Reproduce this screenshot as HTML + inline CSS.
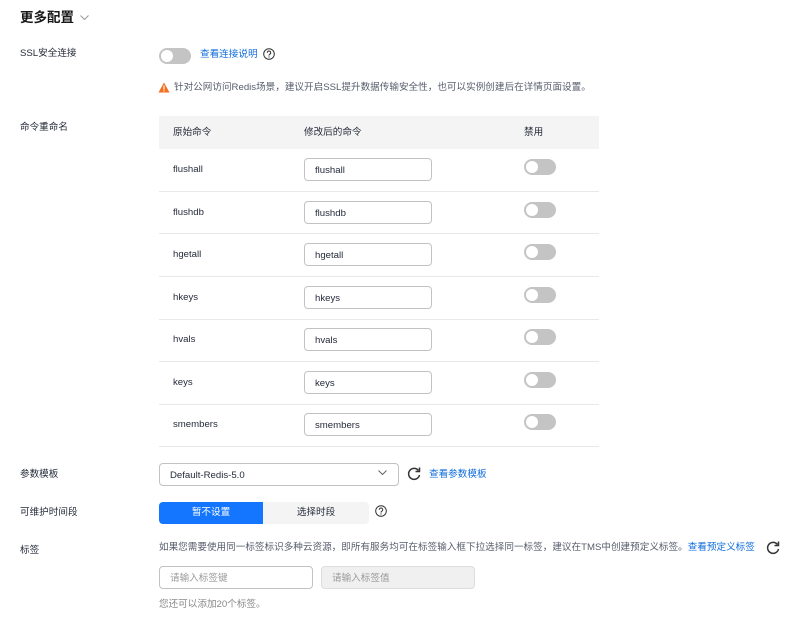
<!DOCTYPE html>
<html><head><meta charset="utf-8"><style>
*{margin:0;padding:0;box-sizing:border-box}
body{width:796px;height:628px;background:#fff;font-family:"Liberation Sans","Noto Sans CJK SC",sans-serif;font-size:9.6px;color:#252b3a;position:relative;overflow:hidden}
.a{position:absolute;white-space:nowrap;line-height:12px}
.lbl{left:20px}
.tg{position:absolute;width:32px;height:16px;border-radius:8px;background:#c4c4c4}
.tg::after{content:"";position:absolute;left:2px;top:2px;width:12px;height:12px;border-radius:50%;background:#fff}
.inp{position:absolute;border:1px solid #c2c2c2;border-radius:4px;background:#fff;padding-left:10px;line-height:23px;height:23px}
.link{color:#0f6cdc}
.sep{position:absolute;left:159px;width:440px;height:1px;background:#e8e8e8}
</style></head><body>
<div class="a" style="left:20px;top:9px;font-size:13.5px;line-height:17px;font-weight:bold;color:#191919">更多配置</div>
<svg class="a" style="left:80px;top:15px" width="9" height="6"><path d="M0.5 0.5L4.5 4.5L8.5 0.5" fill="none" stroke="#999" stroke-width="1"/></svg>

<svg width="0" height="0" style="position:absolute"><defs><g id="q"><circle cx="6" cy="6" r="5.3" fill="none" stroke="#333" stroke-width="1"/><path d="M4.3 4.7A1.7 1.7 0 1 1 6.6 6.3C6.1 6.6 6 6.9 6 7.6" fill="none" stroke="#333" stroke-width="1"/><circle cx="6" cy="9" r="0.6" fill="#333"/></g><g id="r"><path d="M11.5 4.5A5.5 5.5 0 1 0 12.5 9" fill="none" stroke="#333" stroke-width="1.5"/><path d="M12.5 1.5V5.5H8.5" fill="none" stroke="#333" stroke-width="1.5"/></g></defs></svg>

<div class="a lbl" style="top:48px">SSL安全连接</div>
<div class="tg" style="left:159px;top:48px"></div>
<div class="a link" style="left:200px;top:49px">查看连接说明</div>
<svg class="a" style="left:263px;top:48px" width="12" height="12"><use href="#q"/></svg>
<svg class="a" style="left:158px;top:82px" width="12" height="11"><path d="M6 0.5L11.5 10.5H0.5Z" fill="#f66f1c"/><rect x="5.4" y="3.5" width="1.2" height="4" fill="#fff"/><rect x="5.4" y="8.2" width="1.2" height="1.2" fill="#fff"/></svg>
<div class="a" style="left:174px;top:82px;color:#575d6c">针对公网访问Redis场景，建议开启SSL提升数据传输安全性，也可以实例创建后在详情页面设置。</div>

<div class="a lbl" style="top:122px">命令重命名</div>
<div class="a" style="left:159px;top:116px;width:440px;height:33px;background:#f4f4f4"></div>
<div class="a" style="left:173px;top:127px">原始命令</div>
<div class="a" style="left:304px;top:127px">修改后的命令</div>
<div class="a" style="left:524px;top:127px">禁用</div>

<div class="a" style="left:173px;top:164px">flushall</div><div class="inp" style="left:304px;top:158px;width:128px">flushall</div><div class="tg" style="left:524px;top:159px"></div><div class="sep" style="top:191px"></div>
<div class="a" style="left:173px;top:207px">flushdb</div><div class="inp" style="left:304px;top:201px;width:128px">flushdb</div><div class="tg" style="left:524px;top:202px"></div><div class="sep" style="top:233px"></div>
<div class="a" style="left:173px;top:249px">hgetall</div><div class="inp" style="left:304px;top:243px;width:128px">hgetall</div><div class="tg" style="left:524px;top:244px"></div><div class="sep" style="top:276px"></div>
<div class="a" style="left:173px;top:292px">hkeys</div><div class="inp" style="left:304px;top:286px;width:128px">hkeys</div><div class="tg" style="left:524px;top:287px"></div><div class="sep" style="top:319px"></div>
<div class="a" style="left:173px;top:334px">hvals</div><div class="inp" style="left:304px;top:328px;width:128px">hvals</div><div class="tg" style="left:524px;top:329px"></div><div class="sep" style="top:361px"></div>
<div class="a" style="left:173px;top:377px">keys</div><div class="inp" style="left:304px;top:371px;width:128px">keys</div><div class="tg" style="left:524px;top:372px"></div><div class="sep" style="top:404px"></div>
<div class="a" style="left:173px;top:419px">smembers</div><div class="inp" style="left:304px;top:413px;width:128px">smembers</div><div class="tg" style="left:524px;top:414px"></div><div class="sep" style="top:446px"></div>

<div class="a lbl" style="top:469px">参数模板</div>
<div class="inp" style="left:159px;top:463px;width:240px">Default-Redis-5.0</div>
<svg class="a" style="left:378px;top:470px" width="9" height="6"><path d="M0.5 0.5L4.5 4.5L8.5 0.5" fill="none" stroke="#666" stroke-width="1"/></svg>
<svg class="a" style="left:407px;top:466px" width="14" height="15" viewBox="0 0 14 15"><use href="#r"/></svg>
<div class="a link" style="left:429px;top:469px">查看参数模板</div>

<div class="a lbl" style="top:507px">可维护时间段</div>
<div class="a" style="left:159px;top:502px;width:104px;height:22px;background:#1476ff;border-radius:4px 0 0 4px;color:#fff;text-align:center;line-height:22px">暂不设置</div>
<div class="a" style="left:263px;top:502px;width:106px;height:22px;background:#f4f4f4;border-radius:0 4px 4px 0;text-align:center;line-height:22px">选择时段</div>
<svg class="a" style="left:375px;top:505px" width="12" height="12"><use href="#q"/></svg>

<div class="a lbl" style="top:545px">标签</div>
<div class="a" style="left:159px;top:542px;color:#575d6c">如果您需要使用同一标签标识多种云资源，即所有服务均可在标签输入框下拉选择同一标签，建议在TMS中创建预定义标签。<span class="link">查看预定义标签</span></div>
<svg class="a" style="left:766px;top:540px" width="14" height="15" viewBox="0 0 14 15"><use href="#r"/></svg>
<div class="inp" style="left:159px;top:566px;width:154px;color:#999">请输入标签键</div>
<div class="inp" style="left:321px;top:566px;width:154px;color:#999;background:#f0f0f0;border-color:#ddd">请输入标签值</div>
<div class="a" style="left:159px;top:599px;color:#888">您还可以添加20个标签。</div>
</body></html>
